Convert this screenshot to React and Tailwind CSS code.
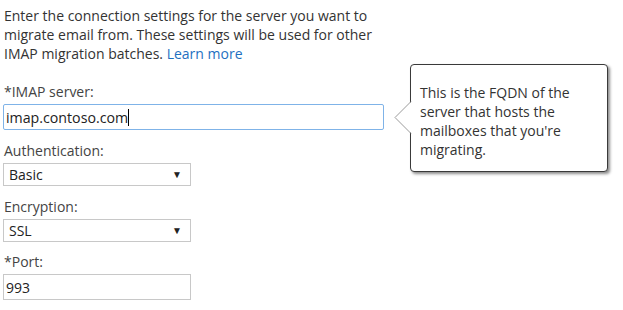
export default function App() {
  const font = { fontFamily: '"Open Sans", "Noto Sans", sans-serif' };
  return (
    <div className="relative w-[623px] h-[310px] bg-white overflow-hidden text-[#333333]" style={font}>
      <div className="pl-[4px] pt-[6px] text-[14px] leading-[19px]">
        <p className="whitespace-nowrap">
          Enter the connection settings for the server you want to<br />
          migrate email from. These settings will be used for other<br />
          IMAP migration batches. <span className="text-[#1e70c1]">Learn more</span>
        </p>
      </div>
      <div className="pl-[3px] text-[14px] leading-[19px]">
        <div className="mt-[19px] pl-[1px] text-[#444]">*IMAP server:</div>
        <div className="mt-[3px] w-[381px] h-[26px] border border-[#7fb3e8] rounded-[2px] flex items-center pl-[2px] text-[14.2px] text-[#222]">
          <span>imap.contoso.com</span>
          <span className="w-[1px] h-[17px] bg-black"></span>
        </div>
        <div className="mt-[11px] pl-[1px] text-[#444]">Authentication:</div>
        <div className="mt-[3px] w-[188px] h-[23px] border border-[#c8c8c8] flex items-center justify-between pl-[5px] pr-[8px] text-[#222]">
          <span>Basic</span>
          <span className="text-[10px]">▼</span>
        </div>
        <div className="mt-[11px] pl-[1px] text-[#444]">Encryption:</div>
        <div className="mt-[3px] w-[188px] h-[23px] border border-[#c8c8c8] flex items-center justify-between pl-[5px] pr-[8px] text-[#222]">
          <span>SSL</span>
          <span className="text-[10px]">▼</span>
        </div>
        <div className="mt-[10px] pl-[1px] text-[#444]">*Port:</div>
        <div className="mt-[3px] w-[188px] h-[26px] border border-[#c8c8c8] flex items-center pl-[2px] text-[#222]">
          <span>993</span>
        </div>
      </div>

      <div className="absolute left-[410px] top-[64px] w-[198px] h-[108px] bg-white border border-[#3a3a3a] rounded-[4px] shadow-[2px_2px_3px_rgba(0,0,0,0.45)] pl-[9px] pt-[18px] text-[14px] leading-[19px] text-[#333] whitespace-nowrap">
        This is the FQDN of the<br />
        server that hosts the<br />
        mailboxes that you're<br />
        migrating.
      </div>
      <svg className="absolute left-[394px] top-[101px]" width="18" height="33" viewBox="0 0 18 33">
        <polygon points="17.5,0.5 1,16.5 17.5,32.5" fill="white" />
        <polyline points="17,0.5 1,16.5 17,32.5" fill="none" stroke="#9a9a9a" strokeWidth="1" />
      </svg>
    </div>
  );
}
